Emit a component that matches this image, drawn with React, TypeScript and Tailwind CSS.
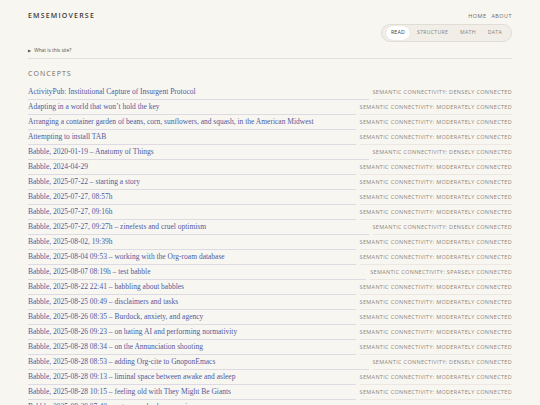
import React from "react";

type Row = { t: string; c: "DENSELY" | "MODERATELY" | "SPARSELY" };

const rows: Row[] = [
  { t: "ActivityPub: Institutional Capture of Insurgent Protocol", c: "DENSELY" },
  { t: "Adapting in a world that won’t hold the key", c: "MODERATELY" },
  { t: "Arranging a container garden of beans, corn, sunflowers, and squash, in the American Midwest", c: "MODERATELY" },
  { t: "Attempting to install TAB", c: "MODERATELY" },
  { t: "Babble, 2020-01-19 – Anatomy of Things", c: "DENSELY" },
  { t: "Babble, 2024-04-29", c: "MODERATELY" },
  { t: "Babble, 2025-07-22 – starting a story", c: "MODERATELY" },
  { t: "Babble, 2025-07-27, 08:57h", c: "MODERATELY" },
  { t: "Babble, 2025-07-27, 09:16h", c: "MODERATELY" },
  { t: "Babble, 2025-07-27, 09:27h – zinefests and cruel optimism", c: "DENSELY" },
  { t: "Babble, 2025-08-02, 19:39h", c: "MODERATELY" },
  { t: "Babble, 2025-08-04 09:53 – working with the Org-roam database", c: "MODERATELY" },
  { t: "Babble, 2025-08-07 08:19h – test babble", c: "SPARSELY" },
  { t: "Babble, 2025-08-22 22:41 – babbling about babbles", c: "MODERATELY" },
  { t: "Babble, 2025-08-25 00:49 – disclaimers and tasks", c: "MODERATELY" },
  { t: "Babble, 2025-08-26 08:35 – Burdock, anxiety, and agency", c: "MODERATELY" },
  { t: "Babble, 2025-08-26 09:23 – on hating AI and performing normativity", c: "MODERATELY" },
  { t: "Babble, 2025-08-28 08:34 – on the Annunciation shooting", c: "MODERATELY" },
  { t: "Babble, 2025-08-28 08:53 – adding Org-cite to GnoponEmacs", c: "DENSELY" },
  { t: "Babble, 2025-08-28 09:13 – liminal space between awake and asleep", c: "MODERATELY" },
  { t: "Babble, 2025-08-28 10:15 – feeling old with They Might Be Giants", c: "MODERATELY" },
  { t: "Babble, 2025-08-29 07:40 – notes on a broken morning", c: "MODERATELY" },
];

const sans = "font-['Open_Sans','Liberation_Sans',sans-serif]";
const serif = "font-['Liberation_Serif','DejaVu_Serif',serif]";

export default function App() {
  return (
    <div className={`min-h-[405px] w-[540px] bg-[#f8f6f1] ${sans}`}>
      <div className="mx-auto w-[484px]">
        <header className="flex justify-between pt-[11px]">
          <div className="text-[7px] font-semibold tracking-[0.17em] text-[#3d3a36]">EMSEMIOVERSE</div>
          <div className="flex flex-col items-end">
            <div className="flex gap-[5px] pt-[1px] text-[5.5px] tracking-[0.08em] text-[#6f6a63]">
              <span>HOME</span>
              <span>ABOUT</span>
            </div>
            <nav className="mt-[4px] flex h-[18px] items-center gap-[2px] rounded-full border border-[#e2ddd4] bg-[#f1eee8] px-[4px] text-[5.2px] tracking-[0.05em] text-[#8a847b]">
              <span className="rounded-full bg-white px-[5px] py-[3px] text-[#3d3a36] shadow-[0_0_1px_rgba(0,0,0,0.15)]">READ</span>
              <span className="px-[5px]">STRUCTURE</span>
              <span className="px-[5px]">MATH</span>
              <span className="px-[5px]">DATA</span>
            </nav>
          </div>
        </header>
        <div className="mt-[5px] border-b border-[#e4e0d8] pb-[4px] text-[4.8px] text-[#55514b]">
          <span className="mr-[2px] text-[4px]">▶</span> What is this site?
        </div>
        <h2 className="mt-[10px] text-[7px] tracking-[0.15em] text-[#6f6a63]">CONCEPTS</h2>
        <ul className="mt-[5px]">
          {rows.map((r, i) => (
            <li key={i} className="flex h-[15px] items-stretch gap-[4px]">
              <span className={`flex min-w-0 flex-1 items-center overflow-hidden whitespace-nowrap border-b border-[#dedae4] text-[7.5px] text-[#4f5a9e] ${serif}`}>
                {r.t}
              </span>
              <span className="flex shrink-0 items-center border-b border-[#ece8e1] text-[5.5px] tracking-[0.06em] text-[#8d867c]">
                SEMANTIC CONNECTIVITY: {r.c} CONNECTED
              </span>
            </li>
          ))}
        </ul>
      </div>
    </div>
  );
}
